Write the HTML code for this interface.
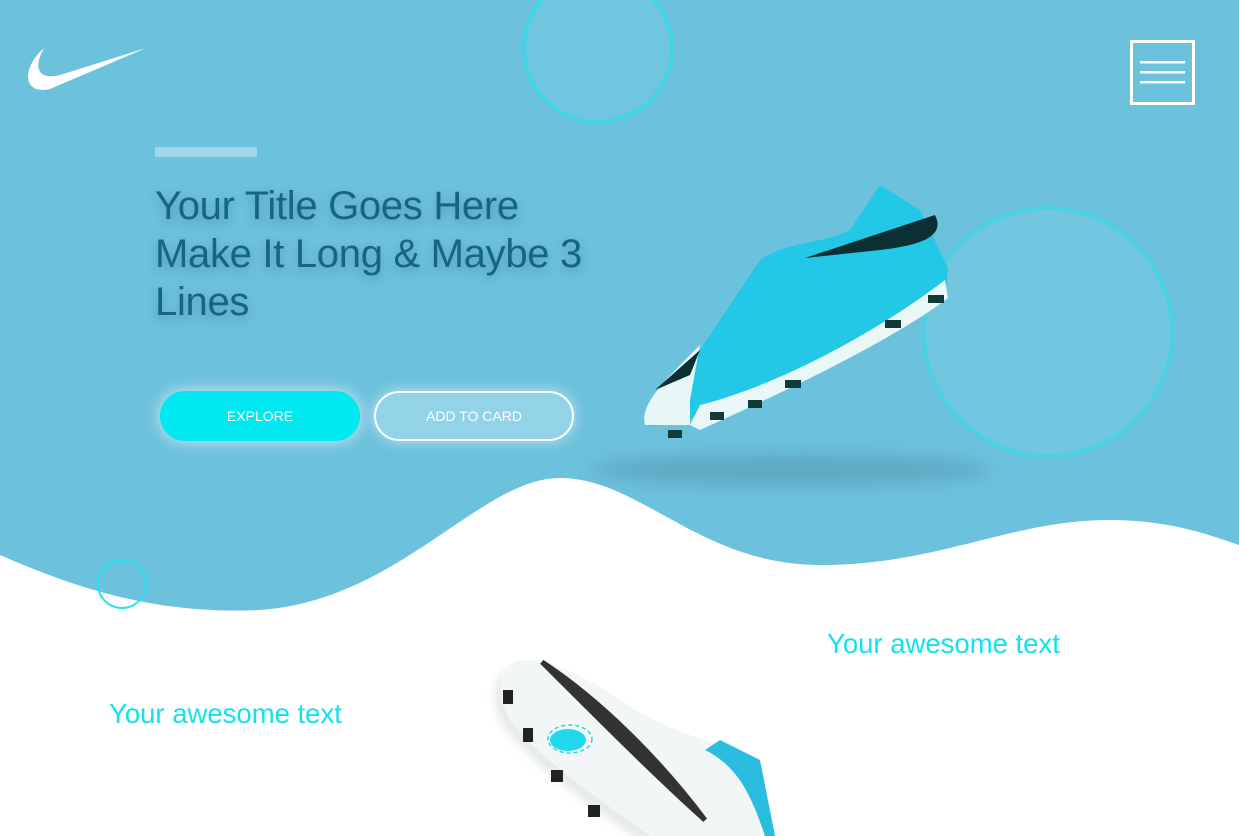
<!DOCTYPE html>
<html><head><meta charset="utf-8"><style>
html,body{margin:0;padding:0}
body{width:1239px;height:836px;overflow:hidden;position:relative;background:#6cc1dd;font-family:"Liberation Sans",sans-serif}
.abs{position:absolute}
.title{left:155px;top:182px;font-size:40px;line-height:48px;color:#17657f;text-shadow:0 4px 10px rgba(20,90,120,.35);letter-spacing:-0.3px}
.bar{left:155px;top:147px;width:102px;height:10px;background:#9dd6e8}
.btn{top:391px;width:200px;height:50px;border-radius:25px;font-size:14px;color:#fff;text-align:center;line-height:50px}
.aw{font-size:27.5px;color:#14e0f0}
</style></head><body>
<svg class="abs" style="left:0;top:0" width="1239" height="836" viewBox="0 0 1239 836">
<defs>
<filter id="bl" x="-50%" y="-50%" width="200%" height="200%"><feGaussianBlur stdDeviation="8"/></filter>
<filter id="bl2" x="-50%" y="-50%" width="200%" height="200%"><feGaussianBlur stdDeviation="4"/></filter>
</defs>
<circle cx="598" cy="48" r="74" fill="#70c5df" stroke="#3fd6e6" stroke-width="4"/>
<circle cx="1048" cy="332" r="124" fill="#73c6e0" stroke="#48d2e4" stroke-width="4"/>
<ellipse cx="790" cy="470" rx="200" ry="16" fill="#4f8ea6" opacity=".45" filter="url(#bl)"/>
<path d="M44 48 C20 70 24 95 50 89 L146 48 L60 75 C40 80 32 70 44 48 Z" fill="#fff"/>
<rect x="1131.5" y="41.5" width="62" height="62" fill="none" stroke="#fff" stroke-width="3"/>
<rect x="1140" y="61" width="45" height="2.5" fill="#fff"/>
<rect x="1140" y="71" width="45" height="2.5" fill="#fff"/>
<rect x="1140" y="81" width="45" height="2.5" fill="#fff"/>
<g>
<path d="M645 425 C640 405 660 385 700 350 L760 260 C790 240 820 245 850 230 L880 185 L920 210 L948 268 L945 300 C900 330 820 360 760 385 C720 405 680 430 645 425 Z" fill="#22c8e6"/>
<path d="M645 425 C640 405 660 385 700 345 L690 400 L690 425 Z" fill="#e8f6f6"/>
<path d="M690 425 L700 405 C780 385 880 330 945 280 L948 298 C900 335 800 385 700 430 Z" fill="#eaf7f7"/>
<path d="M805 258 L935 215 C945 235 925 245 880 250 Z" fill="#0b2f33"/>
<path d="M655 390 L700 350 L690 375 Z" fill="#0b2f33"/>
<g fill="#123a3a"><rect x="668" y="430" width="14" height="8"/><rect x="710" y="412" width="14" height="8"/><rect x="748" y="400" width="14" height="8"/><rect x="785" y="380" width="16" height="8"/><rect x="885" y="320" width="16" height="8"/><rect x="928" y="295" width="16" height="8"/></g>
</g>
<path d="M0 555 C80 590 160 615 260 610 C400 600 480 478 560 478 C640 478 700 565 820 565 C940 565 1010 520 1110 520 C1170 520 1210 535 1239 545 L1239 836 L0 836 Z" fill="#fff"/>
<circle cx="122" cy="584" r="24" fill="none" stroke="#22e4ef" stroke-width="2"/>
<g>
<path d="M505 670 C520 650 560 660 620 700 C680 740 720 740 760 760 L775 836 L650 836 C600 800 540 760 510 720 C498 700 498 680 505 670 Z" fill="#cfd6d8" filter="url(#bl2)" opacity=".5" transform="translate(-6,8)"/>
<path d="M505 670 C520 650 560 660 620 700 C680 740 720 740 760 760 L775 836 L650 836 C600 800 540 760 510 720 C498 700 498 680 505 670 Z" fill="#f2f6f7"/>
<path d="M542 662 C600 700 660 760 705 820 C660 780 600 720 542 662 Z" fill="#333" stroke="#333" stroke-width="5"/>
<path d="M720 740 L760 760 L775 836 L765 836 C750 790 735 765 705 750 Z" fill="#2bbde0"/>
<ellipse cx="568" cy="740" rx="18" ry="11" fill="#22d8ef"/>
<ellipse cx="570" cy="739" rx="22" ry="14" fill="none" stroke="#22d8ef" stroke-width="1.5" stroke-dasharray="4 3"/>
<g fill="#222"><rect x="503" y="690" width="10" height="14"/><rect x="523" y="728" width="10" height="14"/><rect x="551" y="770" width="12" height="12"/><rect x="588" y="805" width="12" height="12"/></g>
</g>
</svg>
<div class="abs bar"></div>
<div class="abs title">Your Title Goes Here<br>Make It Long &amp; Maybe 3<br>Lines</div>
<div class="abs btn" style="left:160px;background:#00e8f0;box-shadow:0 0 16px rgba(255,255,255,.7)">EXPLORE</div>
<div class="abs btn" style="left:374px;width:196px;height:46px;line-height:46px;border:2px solid #fff;background:#93d3e8;box-shadow:0 0 14px rgba(255,255,255,.6)">ADD TO CARD</div>
<div class="abs aw" style="left:827px;top:628px">Your awesome text</div>
<div class="abs aw" style="left:109px;top:698px">Your awesome text</div>
</body></html>
